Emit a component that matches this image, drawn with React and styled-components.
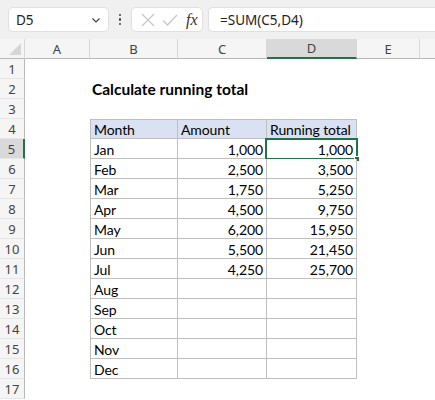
import React from 'react';
import styled, { createGlobalStyle } from 'styled-components';

const GlobalStyle = createGlobalStyle`
  html, body {
    margin: 0;
    padding: 0;
    background: #fff;
    overflow: hidden;
  }
  * { box-sizing: border-box; }
`;

const columns = [
  { label: 'A', width: 65 },
  { label: 'B', width: 88 },
  { label: 'C', width: 89 },
  { label: 'D', width: 90 },
  { label: 'E', width: 63 },
  { label: '', width: 40 },
];

const data = [
  ['Jan', '1,000', '1,000'],
  ['Feb', '2,500', '3,500'],
  ['Mar', '1,750', '5,250'],
  ['Apr', '4,500', '9,750'],
  ['May', '6,200', '15,950'],
  ['Jun', '5,500', '21,450'],
  ['Jul', '4,250', '25,700'],
  ['Aug', '', ''],
  ['Sep', '', ''],
  ['Oct', '', ''],
  ['Nov', '', ''],
  ['Dec', '', ''],
];

const App = () => {
  const rows = [];
  for (let r = 1; r <= 17; r++) {
    const cells = [];
    cells.push(
      <RowHeader key="h" active={r === 5}>{r}</RowHeader>
    );
    columns.forEach((col, ci) => {
      const key = `${r}-${ci}`;
      const inTable = r >= 4 && r <= 16 && ci >= 1 && ci <= 3;
      if (r === 2 && ci === 1) {
        cells.push(<Cell key={key}><Title>Calculate running total</Title></Cell>);
        return;
      }
      if (!inTable) {
        cells.push(<Cell key={key} />);
        return;
      }
      const header = r === 4;
      const text = header
        ? ['Month', 'Amount', 'Running total'][ci - 1]
        : data[r - 5][ci - 1];
      const selected = r === 5 && ci === 3;
      cells.push(
        <TableCell
          key={key}
          header={header}
          number={!header && ci > 1}
          first={ci === 1}
          top={r === 4}
        >
          {text}
          {selected && (
            <Selection>
              <FillHandle />
            </Selection>
          )}
        </TableCell>
      );
    });
    rows.push(<React.Fragment key={r}>{cells}</React.Fragment>);
  }

  return (
    <>
      <GlobalStyle />
      <Page>
        <Toolbar>
          <NameBox>
            <span>D5</span>
            <svg width="12" height="12" viewBox="0 0 12 12">
              <path d="M2.5 4.5 L6 8 L9.5 4.5" fill="none" stroke="#444" strokeWidth="1.2" />
            </svg>
          </NameBox>
          <Dots>
            <i /><i /><i />
          </Dots>
          <ActionBox>
            <svg width="16" height="16" viewBox="0 0 16 16">
              <path d="M2 2 L14 14 M14 2 L2 14" stroke="#c8c8c8" strokeWidth="1.3" fill="none" />
            </svg>
            <svg width="18" height="16" viewBox="0 0 18 16">
              <path d="M2 8.5 L6.5 13 L16 3" stroke="#c8c8c8" strokeWidth="1.3" fill="none" />
            </svg>
            <Fx>fx</Fx>
          </ActionBox>
          <FormulaBox>=SUM(C5,D4)</FormulaBox>
        </Toolbar>
        <Sheet>
          <Corner>
            <svg width="12" height="12" viewBox="0 0 12 12">
              <polygon points="12,0 12,12 0,12" fill="#d6d6d6" />
            </svg>
          </Corner>
          {columns.map((col) => (
            <ColHeader key={col.label || 'x'} active={col.label === 'D'} last={!col.label}>
              {col.label}
            </ColHeader>
          ))}
          {rows}
        </Sheet>
      </Page>
    </>
  );
};

const Page = styled.div`
  width: 435px;
  height: 400px;
  overflow: hidden;
  background: #fff;
`;

const Toolbar = styled.div`
  height: 39px;
  background: #f0f0f0;
  display: flex;
  align-items: flex-start;
  padding: 7px 0 0 8px;
  font-family: 'Noto Sans', 'Open Sans', sans-serif;
`;

const Box = styled.div`
  height: 25px;
  background: #fff;
  border: 1px solid #e0e0e0;
  border-radius: 5px;
  display: flex;
  align-items: center;
`;

const NameBox = styled(Box)`
  width: 101px;
  justify-content: space-between;
  padding: 0 6px 0 7px;
  font-size: 13.5px;
  color: #222;
`;

const Dots = styled.div`
  width: 22px;
  height: 25px;
  display: flex;
  flex-direction: column;
  align-items: center;
  justify-content: center;
  gap: 2px;

  i {
    width: 2.5px;
    height: 2.5px;
    border-radius: 50%;
    background: #444;
  }
`;

const ActionBox = styled(Box)`
  width: 72px;
  padding: 0 4px 0 8px;
  gap: 5px;
`;

const Fx = styled.span`
  font-family: 'Liberation Serif', 'DejaVu Serif', serif;
  font-style: italic;
  font-size: 16px;
  color: #333;
  margin-left: 2px;
`;

const FormulaBox = styled(Box)`
  flex: 1;
  margin-left: 5px;
  border-right: none;
  border-radius: 5px 0 0 5px;
  padding-left: 11px;
  font-size: 13.5px;
  color: #222;
`;

const Sheet = styled.div`
  display: grid;
  grid-template-columns: 25px ${columns.map((c) => `${c.width}px`).join(' ')};
  grid-auto-rows: 20px;
  font-family: Lato, 'Open Sans', sans-serif;
`;

const Corner = styled.div`
  background: #f5f5f5;
  border-right: 1px solid #d8d8d8;
  border-bottom: 1px solid #b8b8b8;
  display: flex;
  align-items: flex-end;
  justify-content: flex-end;
  padding: 0 3px 3px 0;
`;

const ColHeader = styled.div`
  background: ${(p) => (p.active ? '#d9d9d9' : '#f5f5f5')};
  border-right: ${(p) => (p.last ? 'none' : '1px solid #d8d8d8')};
  border-bottom: ${(p) => (p.active ? '2px solid #217346' : '1px solid #b8b8b8')};
  display: flex;
  align-items: center;
  justify-content: center;
  font-family: 'Noto Sans', 'Open Sans', sans-serif;
  font-size: 13px;
  color: #444;
`;

const RowHeader = styled.div`
  background: ${(p) => (p.active ? '#d9d9d9' : '#f5f5f5')};
  border-right: ${(p) => (p.active ? '2px solid #217346' : '1px solid #b8b8b8')};
  border-bottom: 1px solid #e6e6e6;
  display: flex;
  align-items: center;
  justify-content: center;
  font-family: 'Noto Sans', 'Open Sans', sans-serif;
  font-size: 13px;
  color: #444;
`;

const Cell = styled.div`
  position: relative;
  white-space: nowrap;
  overflow: visible;
`;

const Title = styled.span`
  position: absolute;
  left: 2px;
  top: 1px;
  font-weight: 700;
  font-size: 15.5px;
  color: #000;
`;

const TableCell = styled.div`
  position: relative;
  background: ${(p) => (p.header ? '#d9e1f2' : '#fff')};
  border-right: 1px solid #bfbfbf;
  border-bottom: 1px solid #bfbfbf;
  border-left: ${(p) => (p.first ? '1px solid #bfbfbf' : 'none')};
  border-top: ${(p) => (p.top ? '1px solid #bfbfbf' : 'none')};
  display: flex;
  align-items: center;
  justify-content: ${(p) => (p.number ? 'flex-end' : 'flex-start')};
  padding: 1px 3px 0;
  font-size: 14px;
  letter-spacing: -0.1px;
  color: #000;
  white-space: nowrap;
`;

const Selection = styled.div`
  position: absolute;
  left: -2px;
  top: -1px;
  right: -2px;
  bottom: -2px;
  border: 2px solid #217346;
  pointer-events: none;
`;

const FillHandle = styled.div`
  position: absolute;
  right: -4px;
  bottom: -4px;
  width: 6px;
  height: 6px;
  background: #217346;
  border: 1px solid #fff;
`;

export default App;
